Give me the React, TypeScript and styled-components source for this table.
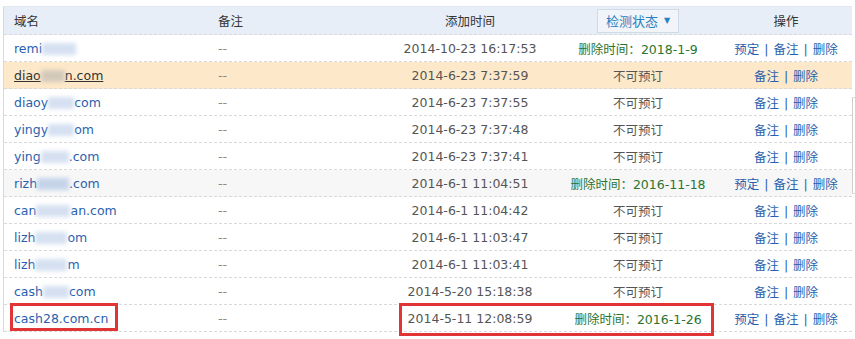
import React from "react";
import styled, {createGlobalStyle} from "styled-components";

const GlobalStyle = createGlobalStyle`
  body {
    margin: 0;
    background: #fff;
    font-family: "DejaVu Sans", "Noto Sans CJK SC", sans-serif;
    font-size: 12.5px;
    color: #555;
  }
`

const Page = styled.div`
  position: relative;
  width: 855px;
  height: 339px;
  overflow: hidden;
  padding: 6px 0 0 3px;
  box-sizing: border-box;`

const Table = styled.div`
  width: 848px;
  border-left: 1px solid #cfdbe8;
  border-top: 1px solid #dfe7f1;`

const Row = styled.div<{ $bg?: string }>`
  display: grid;
  grid-template-columns: 201px 190px 150px 186px 120px;
  height: 27px;
  box-sizing: border-box;
  border-bottom: 1px dashed #d9d9d9;
  background: ${p => p.$bg || "#fff"};
  align-items: center;`

const HeadRow = styled(Row)`
  height: 28px;
  background: #e8eef7;
  color: #333;`

const Cell = styled.div<{ $align?: "left" | "center"; $pl?: number; $pr?: number }>`
  text-align: ${p => p.$align || "left"};
  padding-left: ${p => p.$pl ?? 0}px;
  padding-right: ${p => p.$pr ?? 0}px;
  white-space: nowrap;`

const DomainLink = styled.a<{ $hover?: boolean }>`
  color: ${p => p.$hover ? "#333" : "#2a5fae"};
  text-decoration: ${p => p.$hover ? "underline" : "none"};`

const Blur = styled.span<{ $w: number; $c?: string }>`
  display: inline-block;
  width: ${p => p.$w}px;
  height: 12px;
  vertical-align: -2px;
  background: ${p => p.$c || "#cbd9ee"};
  filter: blur(2px);
  opacity: 0.8;`

const Muted = styled.span`
  color: #888;`

const Green = styled.span`
  color: #2a7430;`

const Ops = styled.span`
  color: #2a5fae;
  a { color: #2a5fae; text-decoration: none; }
  i { font-style: normal; margin: 0 5px; color: #2a5fae; }`

const FilterButton = styled.span`
  display: inline-flex;
  align-items: center;
  gap: 6px;
  height: 24px;
  padding: 0 8px;
  border: 1px solid #cfdbe6;
  background: #f1f5fa;
  color: #2780bf;
  box-sizing: border-box;
  font-size: 13px;`

const Caret = styled.span`
  font-size: 8px;
  color: #2780bf;`

const Mark = styled.div<{ $x: number; $y: number; $w: number; $h: number }>`
  position: absolute;
  left: ${p => p.$x}px;
  top: ${p => p.$y}px;
  width: ${p => p.$w}px;
  height: ${p => p.$h}px;
  border: 3px solid #e13535;
  box-sizing: border-box;
  pointer-events: none;`

const ScrollEdge = styled.div`
  position: absolute;
  left: 852px;
  top: 97px;
  width: 3px;
  height: 95px;
  border-left: 1px solid #cfcfcf;
  border-top: 1px solid #dcdcdc;
  border-bottom: 1px solid #dcdcdc;`

type Item = {
    domain: React.ReactNode
    time: string
    del?: string
    book?: boolean
    bg?: string
    hover?: boolean
}

const items: Item[] = [
    {domain: <>remi<Blur $w={34}/></>, time: "2014-10-23 16:17:53", del: "2018-1-9", book: true},
    {domain: <>diao<Blur $w={24} $c="#c9c2b8"/>n.com</>, time: "2014-6-23 7:37:59", bg: "#fde9c9", hover: true},
    {domain: <>diaoy<Blur $w={26}/>com</>, time: "2014-6-23 7:37:55"},
    {domain: <>yingy<Blur $w={26}/>om</>, time: "2014-6-23 7:37:48"},
    {domain: <>ying<Blur $w={28}/>.com</>, time: "2014-6-23 7:37:41"},
    {domain: <>rizh<Blur $w={32} $c="#b9cbe6"/>.com</>, time: "2014-6-1 11:04:51", del: "2016-11-18", book: true, bg: "#f7f7f7"},
    {domain: <>can<Blur $w={34}/>an.com</>, time: "2014-6-1 11:04:42"},
    {domain: <>lizh<Blur $w={32}/>om</>, time: "2014-6-1 11:03:47"},
    {domain: <>lizh<Blur $w={32}/>m</>, time: "2014-6-1 11:03:41"},
    {domain: <>cash<Blur $w={26}/>com</>, time: "2014-5-20 15:18:38"},
    {domain: <>cash28.com.cn</>, time: "2014-5-11 12:08:59", del: "2016-1-26", book: true},
]

export default function App() {
    return (
        <Page>
            <GlobalStyle/>
            <Table>
                <HeadRow>
                    <Cell $pl={10}>域名</Cell>
                    <Cell $pl={13}>备注</Cell>
                    <Cell $align="center">添加时间</Cell>
                    <Cell $align="center">
                        <FilterButton>检测状态<Caret>▼</Caret></FilterButton>
                    </Cell>
                    <Cell $align="center" $pr={10}>操作</Cell>
                </HeadRow>
                {items.map((it, i) => (
                    <Row key={i} $bg={it.bg}>
                        <Cell $pl={10}>
                            <DomainLink $hover={it.hover}>{it.domain}</DomainLink>
                        </Cell>
                        <Cell $pl={13}><Muted>--</Muted></Cell>
                        <Cell $align="center">{it.time}</Cell>
                        <Cell $align="center">
                            {it.del ? <Green>删除时间：{it.del}</Green> : "不可预订"}
                        </Cell>
                        <Cell $align="center" $pr={10}>
                            <Ops>
                                {it.book && <><a>预定</a><i>|</i></>}
                                <a>备注</a><i>|</i><a>删除</a>
                            </Ops>
                        </Cell>
                    </Row>
                ))}
            </Table>
            <ScrollEdge/>
            <Mark $x={10} $y={303} $w={108} $h={28}/>
            <Mark $x={399} $y={303} $w={315} $h={33}/>
        </Page>
    )
}
